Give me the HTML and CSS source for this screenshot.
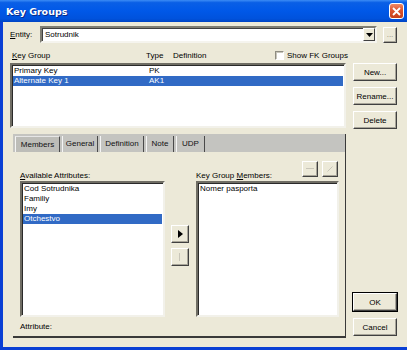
FILE: index.html
```html
<!DOCTYPE html>
<html>
<head>
<meta charset="utf-8">
<link rel="stylesheet" href="styles.css">
</head>
<body>
<div class="window">
  <div class="titlebar">
    <span class="title">Key Groups</span>
    <span class="close"><svg width="9" height="9" viewBox="0 0 9 9"><path d="M1 1L8 8M8 1L1 8" stroke="#fff" stroke-width="1.8"/></svg></span>
  </div>
  <div class="client">
    <div class="entity-row">
      <span class="lbl"><u>E</u>ntity:</span>
      <div class="combo">
        <span class="combo-text">Sotrudnik</span>
        <span class="combo-btn"><svg width="7" height="4" viewBox="0 0 7 4"><path d="M0 0H7L3.5 4Z" fill="#000"/></svg></span>
      </div>
      <span class="btn dots">...</span>
    </div>
    <div class="main">
      <div class="left">
        <div class="hdr">
          <span class="h-key"><u>K</u>ey Group</span>
          <span class="h-type">Type</span>
          <span class="h-def">Definition</span>
          <span class="chk"></span>
          <span class="h-fk">Show FK Groups</span>
        </div>
        <div class="listbox keylist">
          <div class="krow"><span class="k-name">Primary Key</span><span class="k-type">PK</span></div>
          <div class="krow sel"><span class="k-name">Alternate Key 1</span><span class="k-type">AK1</span></div>
        </div>
        <div class="tabpanel">
          <div class="tabstrip">
            <span class="tab active t1">Members</span>
            <span class="tab t2">General</span>
            <span class="tab t3">Definition</span>
            <span class="tab t4">Note</span>
            <span class="tab t5">UDP</span>
          </div>
          <div class="tabbody">
            <div class="cols">
              <div class="col">
                <div class="colhead"><span><u>A</u>vailable Attributes:</span></div>
                <div class="listbox attrlist">
                  <div class="arow">Cod Sotrudnika</div>
                  <div class="arow">Familiy</div>
                  <div class="arow">Imy</div>
                  <div class="arow sel">Otchestvo</div>
                </div>
              </div>
              <div class="arrows">
                <span class="btn abtn"><svg width="5" height="8" viewBox="0 0 5 8"><path d="M0 0L5 4L0 8Z" fill="#000"/></svg></span>
                <span class="btn abtn"><svg width="2" height="8" viewBox="0 0 2 8"><rect x="0" y="0" width="1" height="8" fill="#c8c5b8"/></svg></span>
              </div>
              <div class="col">
                <div class="colhead">
                  <span>Key Group <u>M</u>embers:</span>
                  <span class="tools">
                    <span class="btn tbtn"><svg width="8" height="2" viewBox="0 0 8 2"><rect width="8" height="1" fill="#c8c5b8"/></svg></span>
                    <span class="btn tbtn"><svg width="6" height="6" viewBox="0 0 6 6"><path d="M0.5 5.5L5.5 0.5" stroke="#c8c5b8" stroke-width="1"/></svg></span>
                  </span>
                </div>
                <div class="listbox attrlist">
                  <div class="arow">Nomer pasporta</div>
                </div>
              </div>
            </div>
            <div class="attr-lbl">Attribute:</div>
          </div>
        </div>
      </div>
      <div class="right">
        <span class="btn cmd first">New...</span>
        <span class="btn cmd">Rename...</span>
        <span class="btn cmd">Delete</span>
        <span class="btn cmd def ok">OK</span>
        <span class="btn cmd">Cancel</span>
      </div>
    </div>
  </div>
</div>
</body>
</html>
```

FILE: styles.css
```css
* { box-sizing: border-box; }
html, body { margin: 0; padding: 0; }
body {
  width: 407px;
  height: 350px;
  overflow: hidden;
  font-family: "Liberation Sans", Arial, sans-serif;
  font-size: 8px;
  color: #000;
  background: #ece9d8;
}
u { text-decoration: underline; }

.window {
  width: 407px;
  height: 350px;
  display: flex;
  flex-direction: column;
  border-left: 3px solid #0a3fd4;
  border-bottom: 3px solid #0a3fd4;
  background: #ece9d8;
}

.titlebar {
  height: 22px;
  margin-left: -3px;
  display: flex;
  align-items: center;
  justify-content: space-between;
  padding: 0 3px 0 6px;
  background: linear-gradient(to bottom, #3c8cf5 0%, #0a5fe6 12%, #0058e8 50%, #0052dc 85%, #0044c4 100%);
}
.title {
  color: #fff;
  font-weight: bold;
  font-size: 9.5px;
  font-family: "DejaVu Sans", "Liberation Sans", sans-serif;
  text-shadow: 1px 1px 0 #0a2a8a;
}
.close {
  width: 15px;
  height: 16px;
  border: 1px solid #fff;
  border-radius: 3px;
  background: linear-gradient(to bottom, #f08a66, #dd5530 45%, #c6401a);
  display: flex;
  align-items: center;
  justify-content: center;
}

.client {
  flex: 1;
  display: flex;
  flex-direction: column;
  padding: 4px 0 0 7px;
}

.entity-row {
  height: 17px;
  display: flex;
  align-items: center;
}
.lbl { width: 30px; }
.combo {
  width: 337px;
  height: 17px;
  background: #fff;
  border: 2px solid;
  border-color: #7f7d72 #f5f4ee #f5f4ee #7f7d72;
  box-shadow: inset 1px 1px 0 #404040;
  display: flex;
  align-items: center;
  justify-content: space-between;
  padding-left: 3px;
}
.combo-btn {
  width: 12px;
  height: 13px;
  background: #ece9d8;
  border: 1px solid;
  border-color: #fff #404040 #404040 #fff;
  display: flex;
  align-items: center;
  justify-content: center;
}

.btn {
  display: flex;
  align-items: center;
  justify-content: center;
  background: #ece9d8;
  border: 1px solid;
  border-color: #fff #404040 #404040 #fff;
  box-shadow: inset -1px -1px 0 #a8a599;
}
.dots {
  width: 14px;
  height: 16px;
  margin-left: 6px;
  color: #8a877b;
}

.main {
  margin-top: 5px;
  height: 290px;
  display: grid;
  grid-template-columns: 336px 44px;
  column-gap: 7px;
}
.left { display: flex; flex-direction: column; }

.hdr {
  height: 15px;
  display: flex;
  align-items: center;
  padding-left: 2px;
  white-space: nowrap;
}
.hdr > span { flex-shrink: 0; }
.h-key { width: 134px; }
.h-type { width: 27px; }
.h-def { width: 102px; }
.chk {
  width: 9px;
  height: 9px;
  background: #fff;
  border: 1px solid;
  border-color: #8f8d82 #fff #fff #8f8d82;
  box-shadow: inset 1px 1px 0 #c8c6bb;
  margin-right: 3px;
}

.listbox {
  background: #fff;
  border: 2px solid;
  border-color: #6f6d64 #f2f1ea #f2f1ea #6f6d64;
  box-shadow: inset 1px 1px 0 #2a2a2a;
}
.keylist {
  height: 65px;
  padding: 1px 0 0 1px;
}
.krow {
  height: 10px;
  line-height: 10px;
  display: flex;
  padding-left: 1px;
  margin-right: 1px;
}
.k-name { width: 135px; }
.sel { background: #316ac5; color: #fff; }

.tabpanel {
  margin: 6px 0 0 3px;
  height: 204px;
  display: flex;
  flex-direction: column;
  border-right: 1px solid #3a3a3a;
}
.tabstrip {
  height: 18px;
  background: #c4c4c0;
  display: flex;
  align-items: flex-end;
  padding-left: 2px;
  gap: 2px;
}
.tab {
  height: 16px;
  line-height: 15px;
  text-align: center;
  border-left: 1px solid #f4f4f4;
  border-right: 1px solid #4a4a4a;
  color: #111;
  white-space: nowrap;
}
.t1 { width: 45px; }
.t2 { width: 36px; }
.t3 { width: 44px; }
.t4 { width: 28px; }
.t5 { width: 29px; }
.tab.active {
  background: #bdbdb8;
  border-top: 1px solid #e6e6e6;
}
.tabbody {
  flex: 1;
  display: flex;
  flex-direction: column;
  padding: 9px 5px 0 7px;
  border-bottom: 2px solid #3a3a3a;
}
.cols {
  display: grid;
  grid-template-columns: 145px 18px 144px;
  column-gap: 6px;
}
.cols .col:last-child { margin-left: 1px; }
.col { display: flex; flex-direction: column; }
.colhead {
  height: 20px;
  display: flex;
  align-items: flex-end;
  justify-content: space-between;
  line-height: 10px;
}
.tools {
  display: flex;
  gap: 4px;
  margin-bottom: 4px;
  margin-right: 1px;
}
.tbtn { width: 16px; height: 16px; }
.attrlist {
  height: 136px;
  padding: 1px 0 0 1px;
}
.arow {
  height: 10px;
  line-height: 10px;
  padding-left: 1px;
  margin-right: 1px;
}
.arrows {
  display: flex;
  flex-direction: column;
  gap: 5px;
  padding-top: 64px;
}
.abtn { width: 18px; height: 18px; }
.attr-lbl {
  margin-top: 5px;
  line-height: 10px;
}

.right {
  display: flex;
  flex-direction: column;
}
.cmd {
  width: 44px;
  height: 18px;
  margin-bottom: 6px;
}
.cmd.first { margin-top: 15px; }
.cmd.ok { margin-top: auto; margin-bottom: 7px; }
.cmd:last-child { margin-bottom: 2px; }
.def { outline: 1px solid #000; }
```
